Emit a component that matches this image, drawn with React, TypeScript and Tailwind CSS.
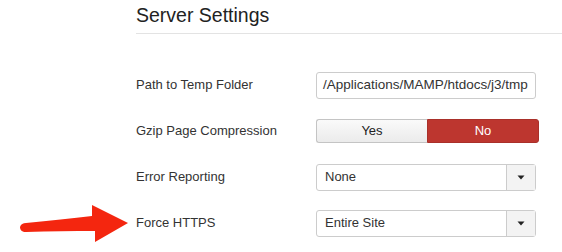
import React from 'react';

const font = { fontFamily: '"Liberation Sans", Arial, sans-serif' };

function Caret() {
  return (
    <div className="flex w-[29px] items-center justify-center self-stretch border-l border-[#ccc] bg-[#f3f3f3]">
      <svg width="8" height="5" viewBox="0 0 8 5">
        <path d="M0.5 0.5 L7.5 0.5 L4 4.5 Z" fill="#222" />
      </svg>
    </div>
  );
}

function Row({ label, children }: { label: string; children: React.ReactNode }) {
  return (
    <div className="flex h-[46px] items-center">
      <div className="w-[180px] text-[13px] text-[#333]">{label}</div>
      {children}
    </div>
  );
}

export default function App() {
  return (
    <div className="relative h-[252px] w-[562px] overflow-hidden bg-white" style={font}>
      <div className="pl-[136px]">
        <h2 className="border-b border-[#e3e3e3] pt-[3px] pb-[6px] text-[19.5px] leading-[24px] text-[#222]">
          Server Settings
        </h2>
        <div className="mt-[28px]">
          <Row label="Path to Temp Folder">
            <div className="flex h-[27px] w-[220px] items-center rounded-[3px] border border-[#ccc] px-[6px] text-[13.5px] text-[#333]">
              /Applications/MAMP/htdocs/j3/tmp
            </div>
          </Row>
          <Row label="Gzip Page Compression">
            <div className="flex h-[24px] w-[223px] text-[13px]">
              <div className="flex w-[111px] items-center justify-center rounded-l-[3px] border border-r-0 border-[#c4c4c4] bg-gradient-to-b from-[#fafafa] to-[#ebebeb] text-[#222]">
                Yes
              </div>
              <div className="flex flex-1 items-center justify-center rounded-r-[3px] border border-[#a9302a] bg-[#bd362f] text-white">
                No
              </div>
            </div>
          </Row>
          <Row label="Error Reporting">
            <div className="flex h-[27px] w-[220px] items-center rounded-[3px] border border-[#ccc] text-[13px] text-[#333]">
              <div className="flex-1 pl-[8px]">None</div>
              <Caret />
            </div>
          </Row>
          <Row label="Force HTTPS">
            <div className="flex h-[27px] w-[220px] items-center rounded-[3px] border border-[#ccc] text-[13px] text-[#333]">
              <div className="flex-1 pl-[8px]">Entire Site</div>
              <Caret />
            </div>
          </Row>
        </div>
      </div>
      <svg className="absolute left-0 top-[200px]" width="140" height="50" viewBox="0 0 140 50">
        <path
          d="M20 27 C21 24 23 23 26 23 C50 21 72 18 92 16 L92 5 L128 23 L95 42 L95 31 C72 31 50 31 26 32 C22 32 20 30 20 27 Z"
          fill="#f4260f"
        />
      </svg>
    </div>
  );
}
